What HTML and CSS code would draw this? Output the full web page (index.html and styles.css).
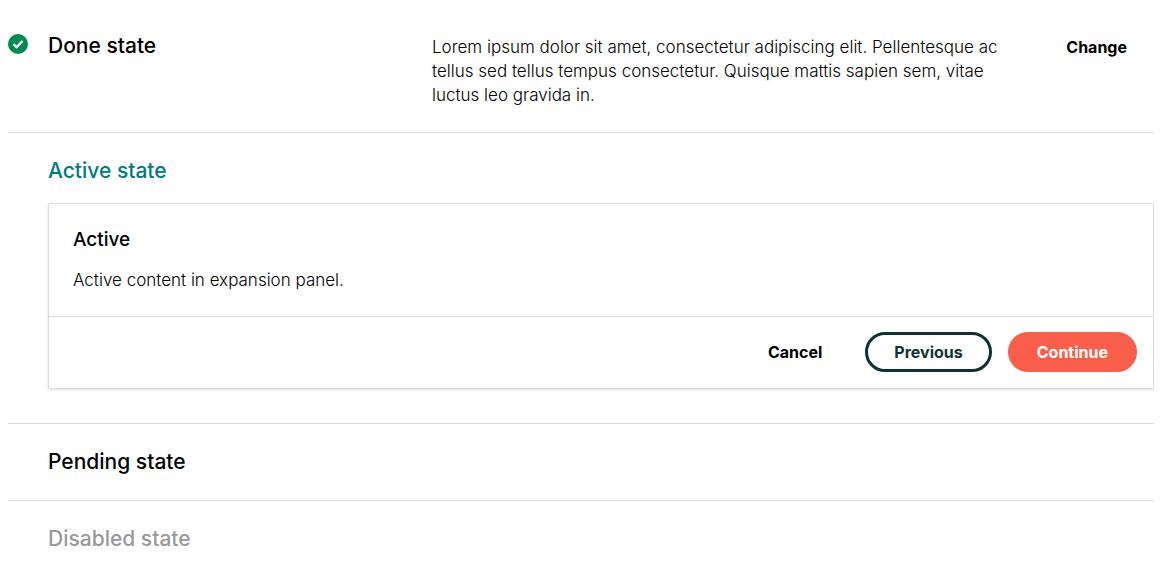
FILE: index.html
```html
<!DOCTYPE html>
<html lang="en">
<head>
<meta charset="utf-8">
<meta name="viewport" content="width=device-width, initial-scale=1">
<title>Stepper</title>
<link rel="stylesheet" href="styles.css">
</head>
<body>
<main class="steps">
  <section class="step">
    <svg class="step-icon" viewBox="0 0 20 20" role="img" aria-label="Done">
      <circle cx="10" cy="10" r="10" fill="#008c50"/>
      <path d="M5.4 10.1 8.6 13.1 14.6 7" fill="none" stroke="#fff" stroke-width="2.4"/>
    </svg>
    <div class="step-summary">
      <h2 class="step-title">Done state</h2>
      <p class="step-text">Lorem ipsum dolor sit amet, consectetur adipiscing elit. Pellentesque ac tellus sed tellus tempus consectetur. Quisque mattis sapien sem, vitae luctus leo gravida in.</p>
      <button class="button step-change" type="button">Change</button>
    </div>
  </section>
  <section class="step step-active">
    <div class="step-body">
      <h2 class="step-title">Active state</h2>
      <div class="card">
        <div class="card-content">
          <h3 class="card-title">Active</h3>
          <p class="card-text">Active content in expansion panel.</p>
        </div>
        <div class="card-footer">
          <button class="button" type="button">Cancel</button>
          <button class="button button-outline" type="button">Previous</button>
          <button class="button button-primary" type="button">Continue</button>
        </div>
      </div>
    </div>
  </section>
  <section class="step">
    <div class="step-body"><h2 class="step-title">Pending state</h2></div>
  </section>
  <section class="step step-disabled">
    <div class="step-body"><h2 class="step-title">Disabled state</h2></div>
  </section>
</main>
</body>
</html>
```
FILE: styles.css
```css
* { box-sizing: border-box; }

body {
  margin: 8px;
  background: #fff;
  color: #000;
  font: 300 17px/24px Inter, "Liberation Sans", sans-serif;
}

h2, h3, p { margin: 0; }

.step {
  display: grid;
  grid-template-columns: 40px minmax(0, 1fr);
  padding: 24px 0;
  border-bottom: 1px solid #dcdcdc;
}

.step:last-child { border-bottom: 0; }

.step-icon {
  width: 20px;
  height: 20px;
  margin-top: 2px;
}

.step-body,
.step-summary { grid-column: 2; }

.step-summary {
  display: grid;
  grid-template-columns: 384px minmax(0, 1fr) auto;
  align-items: start;
}

.step-title {
  font-size: 21px;
  line-height: 28px;
  font-weight: 500;
}

.step-text { padding: 3px 16px 1px 0; }

.step-change { margin-top: -5px; }

.step-active { padding-bottom: 34px; }
.step-active .step-title { color: #007b80; }
.step-disabled .step-title { color: #999; }

.card {
  margin-top: 18px;
  border: 1px solid #dcdcdc;
  border-radius: 1px;
  box-shadow: 0 1px 3px rgba(0, 0, 0, 0.12);
}

.card-content { padding: 24px; }

.card-title {
  font-size: 19px;
  line-height: 24px;
  font-weight: 500;
}

.card-text { margin-top: 16px; }

.card-footer {
  display: flex;
  flex-wrap: wrap;
  justify-content: flex-end;
  gap: 16px;
  padding: 15px 16px 16px;
  border-top: 1px solid #dcdcdc;
}

.button {
  min-height: 40px;
  padding: 0 24px;
  border: 3px solid transparent;
  border-radius: 20px;
  background: transparent;
  color: #000;
  font: 700 16px/24px Inter, "Liberation Sans", sans-serif;
  cursor: pointer;
}

.button-outline,
.button-primary { padding: 0 26px; }

.button-outline {
  border-color: #0e3234;
  color: #0e3234;
}

.button-primary {
  border-color: #fa5f4b;
  background: #fa5f4b;
  color: #fff;
}
```
